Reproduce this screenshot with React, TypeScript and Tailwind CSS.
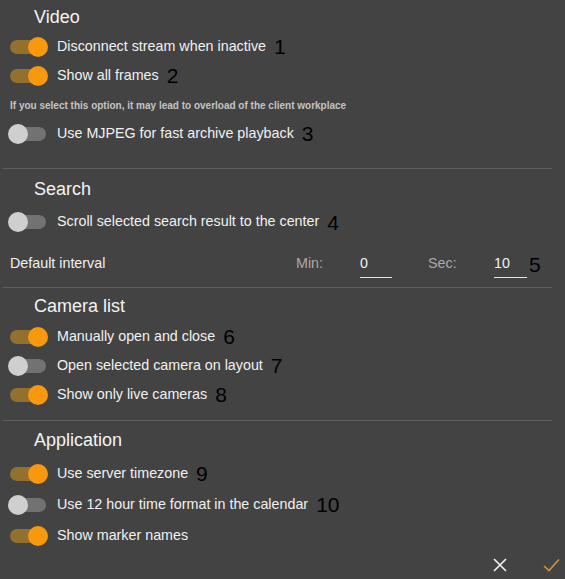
import type { ReactNode } from 'react';

function Toggle({ on }: { on: boolean }) {
    return (
        <div className="relative w-[40px] h-[20px] shrink-0">
            <div className={`absolute left-[2px] right-[2px] top-[3px] h-[14px] rounded-full ${on ? 'bg-[#94702f]' : 'bg-[#727272]'}`} />
            <div className={`absolute top-0 w-[20px] h-[20px] rounded-full ${on ? 'left-[20px] bg-[#f7980f]' : 'left-0 bg-[#cfcfcf]'}`} />
        </div>
    );
}

function Mark({ n }: { n: string }) {
    return <span className="text-[21px] leading-none text-black ml-[8px]">{n}</span>;
}

function Row({ on, label, n, h }: { on: boolean; label: string; n?: string; h: string }) {
    return (
        <div className={`flex items-center pl-[8px] ${h}`}>
            <Toggle on={on} />
            <span className="ml-[9px] text-[14.3px] text-[#f1f1f1]">{label}</span>
            {n && <Mark n={n} />}
        </div>
    );
}

function Title({ children, h }: { children: ReactNode; h: string }) {
    return <div className={`flex items-center pt-[2px] pl-[34px] text-[18px] text-[#f4f4f4] ${h}`}>{children}</div>;
}

const Divider = () => <div className="h-px bg-[#5e5e5e] ml-[3px] mr-[13px]" />;

export default function App() {
    return (
        <div className="w-[565px] h-[579px] bg-[#434343] overflow-hidden font-['Liberation_Sans',Arial,sans-serif] flex flex-col">
            <Title h="h-[32px]">Video</Title>
            <Row on label="Disconnect stream when inactive" n="1" h="h-[29px]" />
            <Row on label="Show all frames" n="2" h="h-[29px]" />
            <div className="h-[30px] flex items-center pl-[10px] text-[10px] font-bold text-[#c4c4c4]">
                If you select this option, it may lead to overload of the client workplace
            </div>
            <Row on={false} label="Use MJPEG for fast archive playback" n="3" h="h-[27px]" />
            <div className="h-[21px]" />
            <Divider />

            <Title h="h-[38px]">Search</Title>
            <Row on={false} label="Scroll selected search result to the center" n="4" h="h-[30px]" />
            <div className="h-[50px] pt-[4px] flex items-center text-[14.3px]">
                <span className="pl-[10px] w-[296px] text-[#f1f1f1]">Default interval</span>
                <span className="w-[64px] text-[#a9a9a9]">Min:</span>
                <div className="w-[32px] h-[28px] flex items-center border-b border-[#e6e6e6] text-[#f1f1f1]">0</div>
                <span className="ml-[36px] w-[66px] text-[#a9a9a9]">Sec:</span>
                <div className="w-[33px] h-[28px] flex items-center border-b border-[#e6e6e6] text-[#f1f1f1]">10</div>
                <span className="ml-[2px] text-[21px] leading-none text-black">5</span>
            </div>
            <Divider />

            <Title h="h-[34px]">Camera list</Title>
            <Row on label="Manually open and close" n="6" h="h-[29px]" />
            <Row on={false} label="Open selected camera on layout" n="7" h="h-[29px]" />
            <Row on label="Show only live cameras" n="8" h="h-[29px]" />
            <div className="h-[11px]" />
            <Divider />

            <Title h="h-[37px]">Application</Title>
            <Row on label="Use server timezone" n="9" h="h-[31px]" />
            <Row on={false} label="Use 12 hour time format in the calendar" n="10" h="h-[31px]" />
            <Row on label="Show marker names" h="h-[31px]" />
            <div className="h-[28px] flex items-center justify-end">
                <svg width="14" height="14" viewBox="0 0 14 14" className="mr-[36px]">
                    <path d="M1 1 L13 13 M13 1 L1 13" stroke="#f2f2f2" strokeWidth="1.6" />
                </svg>
                <svg width="17" height="14" viewBox="0 0 17 14" className="mr-[5px]">
                    <path d="M1 8 L6 12.5 L16 1.5" stroke="#d4942f" strokeWidth="1.6" fill="none" />
                </svg>
            </div>
        </div>
    );
}
